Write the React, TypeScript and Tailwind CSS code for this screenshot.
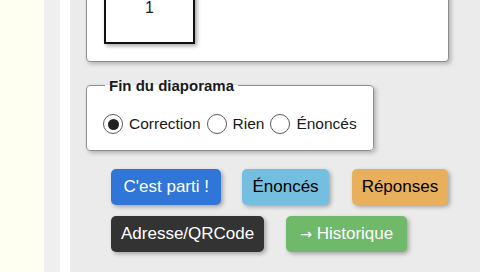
import React, { useState } from 'react';

const options = ['Correction', 'Rien', 'Énoncés'];

const Radio = ({ checked }: { checked: boolean }) => (
    <span className="flex h-[20px] w-[20px] shrink-0 items-center justify-center rounded-full border-[1.5px] border-[#5a5a5a] bg-white">
        {checked && <span className="h-[11px] w-[11px] rounded-full bg-[#222]" />}
    </span>
);

const Btn = ({ children, className }: { children: React.ReactNode; className: string }) => (
    <button
        className={`h-[36px] rounded-[5px] text-[17px] leading-[20px] shadow-[2px_2px_4px_rgba(0,0,0,0.3)] ${className}`}
    >
        {children}
    </button>
);

export default function App() {
    const [fin, setFin] = useState('Correction');

    return (
        <div className="flex h-[272px] w-[480px] overflow-hidden font-['Liberation_Sans',Arial,sans-serif] text-[#1a1a1a]">
            <div className="w-[44px] shrink-0 bg-[#fefff0]" />
            <div className="w-[16px] shrink-0 bg-[#efefef]" />
            <div className="w-[10px] shrink-0 bg-white" />

            <div className="flex-1 bg-[#ebebeb] pl-4 pr-[31px]">
                {/* Top card, scrolled partly out of view */}
                <div className="-mt-[45px] rounded-[4px] border border-[#8f8f8f] bg-white px-[17px] pb-[17px] pt-[16px] shadow-[2px_2px_4px_rgba(0,0,0,0.25)]">
                    <div className="flex h-[72px] w-[91px] items-center justify-center border-2 border-[#111] bg-white text-[16px] shadow-[2px_2px_4px_rgba(0,0,0,0.35)]">
                        1
                    </div>
                </div>

                {/* Fin du diaporama */}
                <fieldset className="mt-[15px] w-[288px] rounded-[4px] border border-[#8f8f8f] bg-white px-[16px] pb-[16px] pt-[20px] shadow-[2px_2px_4px_rgba(0,0,0,0.25)]">
                    <legend className="ml-[2px] px-[4px] text-[15px] font-bold leading-[17px]">Fin du diaporama</legend>
                    <div className="flex items-center gap-[6px] text-[15.5px] leading-[20px]">
                        {options.map((o) => (
                            <label key={o} className="flex cursor-pointer items-center gap-[6px]" onClick={() => setFin(o)}>
                                <Radio checked={fin === o} />
                                <span>{o}</span>
                            </label>
                        ))}
                    </div>
                </fieldset>

                {/* Actions */}
                <div className="mt-[18px] flex flex-col gap-[11px] pl-[25px]">
                    <div className="flex gap-[21px]">
                        <Btn className="bg-[#2f76d8] px-[12.5px] text-white">C'est parti !</Btn>
                        <Btn className="bg-[#74bee0] px-[10px] text-black">Énoncés</Btn>
                        <Btn className="ml-[2px] bg-[#e8b05d] px-[10px] text-black">Réponses</Btn>
                    </div>
                    <div className="flex gap-[22px]">
                        <Btn className="bg-[#333333] px-[10px] text-white">Adresse/QRCode</Btn>
                        <Btn className="bg-[#70b86a] px-[14px] text-white">
                            <span className="font-['DejaVu_Sans',sans-serif] text-[14px]">→</span> Historique
                        </Btn>
                    </div>
                </div>
            </div>
        </div>
    );
}
